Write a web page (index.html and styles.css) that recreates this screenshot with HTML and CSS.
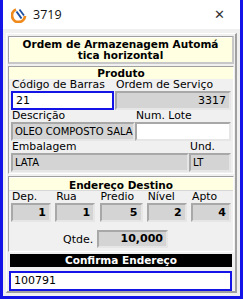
FILE: index.html
```html
<!DOCTYPE html>
<html>
<head>
<meta charset="utf-8">
<link rel="stylesheet" href="styles.css">
</head>
<body>
<div class="win">
  <div class="titlebar">
    <svg class="logo" width="16" height="16" viewBox="0 0 16 16">
      <path d="M5 2.5 A6.5 6.5 0 1 0 14 9" fill="none" stroke="#f08a1c" stroke-width="2.8"/>
      <path d="M5.5 4.5 L10.5 11.5" stroke="#1f4fa0" stroke-width="2"/>
      <path d="M8.5 2.5 L13 8.5" stroke="#1f4fa0" stroke-width="1.8"/>
    </svg>
    <span class="wtitle">3719</span>
    <span class="close">&#x2715;</span>
  </div>
  <div class="client">
    <div class="frame">
      <div class="title-panel">Ordem de Armazenagem Automá<br>tica horizontal</div>
      <div class="group">
        <div class="hdr">Produto</div>
        <div class="row">
          <div class="field w-cod"><div class="lbl">Código de Barras</div><div class="inp focus">21</div></div>
          <div class="field w-os"><div class="lbl">Ordem de Serviço</div><div class="inp ro right">3317</div></div>
        </div>
        <div class="row">
          <div class="field w-desc"><div class="lbl">Descrição</div><div class="inp ro small">OLEO COMPOSTO SALA</div></div>
          <div class="field w-lote"><div class="lbl">Num. Lote</div><div class="inp white"></div></div>
        </div>
        <div class="row">
          <div class="field w-emb"><div class="lbl">Embalagem</div><div class="inp ro small">LATA</div></div>
          <div class="field w-und"><div class="lbl">Und.</div><div class="inp ro small">LT</div></div>
        </div>
      </div>
      <div class="group g2">
        <div class="hdr">Endereço Destino</div>
        <div class="row addr">
          <div class="field w-a1"><div class="lbl">Dep.</div><div class="inp ro right bold">1</div></div>
          <div class="field w-a2"><div class="lbl">Rua</div><div class="inp ro right bold">1</div></div>
          <div class="field w-a3"><div class="lbl">Predio</div><div class="inp ro right bold">5</div></div>
          <div class="field w-a4"><div class="lbl">Nível</div><div class="inp ro right bold">2</div></div>
          <div class="field w-a5"><div class="lbl">Apto</div><div class="inp ro right bold">4</div></div>
        </div>
        <div class="qrow">
          <span class="qlbl">Qtde.</span>
          <div class="inp ro right bold qty">10,000</div>
        </div>
      </div>
      <div class="confirm">Confirma Endereço</div>
      <div class="inp focus final">100791</div>
    </div>
  </div>
</div>
</body>
</html>
```
FILE: styles.css
```css
* { box-sizing: border-box; }
html, body { margin: 0; padding: 0; background: #fff; }
body { font-family: "DejaVu Sans", sans-serif; }
.win {
  width: 243px; height: 299px;
  border-left: 3px solid #1414e6;
  border-right: 3px solid #1414e6;
  border-bottom: 3px solid #1414e6;
  display: flex; flex-direction: column;
  background: #fff;
}
.titlebar {
  height: 29px; display: flex; align-items: center;
  padding-left: 8px; background: #fff;
}
.logo { display: block; margin-top: 1px; }
.wtitle {
  margin-left: 6px; font-family: "Open Sans", "DejaVu Sans", sans-serif;
  font-size: 12.5px; color: #111;
}
.close {
  margin-left: auto; margin-right: 15px; font-size: 13px; color: #333;
  font-family: "DejaVu Sans", sans-serif;
}
.client {
  flex: 1; background: #f0f0f0; padding: 4px 3px 3px 3px;
}
.frame {
  height: 100%;
  border-top: 1px solid #fff; border-left: 1px solid #fff;
  border-right: 2px solid #a0a0a0; border-bottom: 2px solid #a0a0a0;
  padding: 2px 1px 0 1px;
}
.title-panel {
  height: 28px;
  background: #ffffe1;
  border-top: 1px solid #a0a0a0; border-left: 1px solid #a0a0a0;
  border-right: 2px solid #c8c8c8; border-bottom: 2px solid #c8c8c8;
  box-shadow: inset 1px 1px 0 #fff;
  font-family: "DejaVu Sans", sans-serif;
  font-weight: bold; font-size: 10.5px; line-height: 11px;
  text-align: center; padding-top: 2px; color: #000;
}
.group {
  margin-top: 2px;
  border-top: 1px solid #a0a0a0; border-left: 1px solid #a0a0a0;
  border-right: 1px solid #fff; border-bottom: 1px solid #fff;
  padding: 0 2px 1px 2px;
}
.hdr {
  height: 12px; margin: 0 -2px;
  background: #ffffe1;
  font-family: "DejaVu Sans", sans-serif;
  font-weight: bold; font-size: 10.5px; line-height: 12px;
  text-align: center; color: #000;
}
.g2 { padding-bottom: 3px; }
.g2 .hdr { height: 14px; line-height: 14px; border-top: 1px solid #fff; border-bottom: 1px solid #d8d8d8; margin: 0 -2px 0 -2px; }
.row { display: flex; justify-content: space-between; }
.field { display: flex; flex-direction: column; }
.lbl {
  font-family: "DejaVu Sans", sans-serif; font-size: 10.8px; line-height: 12px;
  height: 12px; color: #000; padding-left: 1px; white-space: nowrap;
}
.inp {
  height: 19px;
  font-family: "DejaVu Sans", sans-serif; font-size: 11px; line-height: 15px;
  padding: 0 3px; color: #000; white-space: nowrap; overflow: hidden;
}
.inp.ro {
  background: #d4d4d4;
  border-top: 2px solid #a8a8a8; border-left: 2px solid #a8a8a8;
  border-right: 2px solid #e6e6e6; border-bottom: 2px solid #e6e6e6;
}
.inp.white {
  background: #fff;
  border-top: 2px solid #a8a8a8; border-left: 2px solid #a8a8a8;
  border-right: 2px solid #e6e6e6; border-bottom: 2px solid #e6e6e6;
}
.inp.focus {
  background: #fff; border: 2px solid #1414e6;
}
.inp.small { font-size: 10px; line-height: 15px; padding-left: 2px; }
.right { text-align: right; }
.bold { font-weight: bold; }
.w-cod { width: 103px; }
.w-os { width: 116px; }
.w-desc { width: 124px; }
.w-lote { width: 98px; }
.w-emb { width: 178px; }
.w-und { width: 42px; }
.addr .field { width: 40px; }
.addr .w-a3 { width: 43px; }
.qrow { display: flex; align-items: center; margin-top: 8px; padding-left: 52px; }
.qlbl { font-family: "DejaVu Sans", sans-serif; font-size: 11px; width: 34px; }
.qty { width: 71px; height: 18px; line-height: 14px; }
.confirm {
  margin-top: 2px; margin-left: 2px; margin-right: 2px;
  height: 13px; background: #000; color: #fff;
  font-family: "DejaVu Sans", sans-serif; font-weight: bold; font-size: 10.5px; line-height: 13px;
  text-align: center;
}
.inp.final { margin-top: 4px; margin-left: 1px; margin-right: 2px; height: 20px; line-height: 16px; }
```
